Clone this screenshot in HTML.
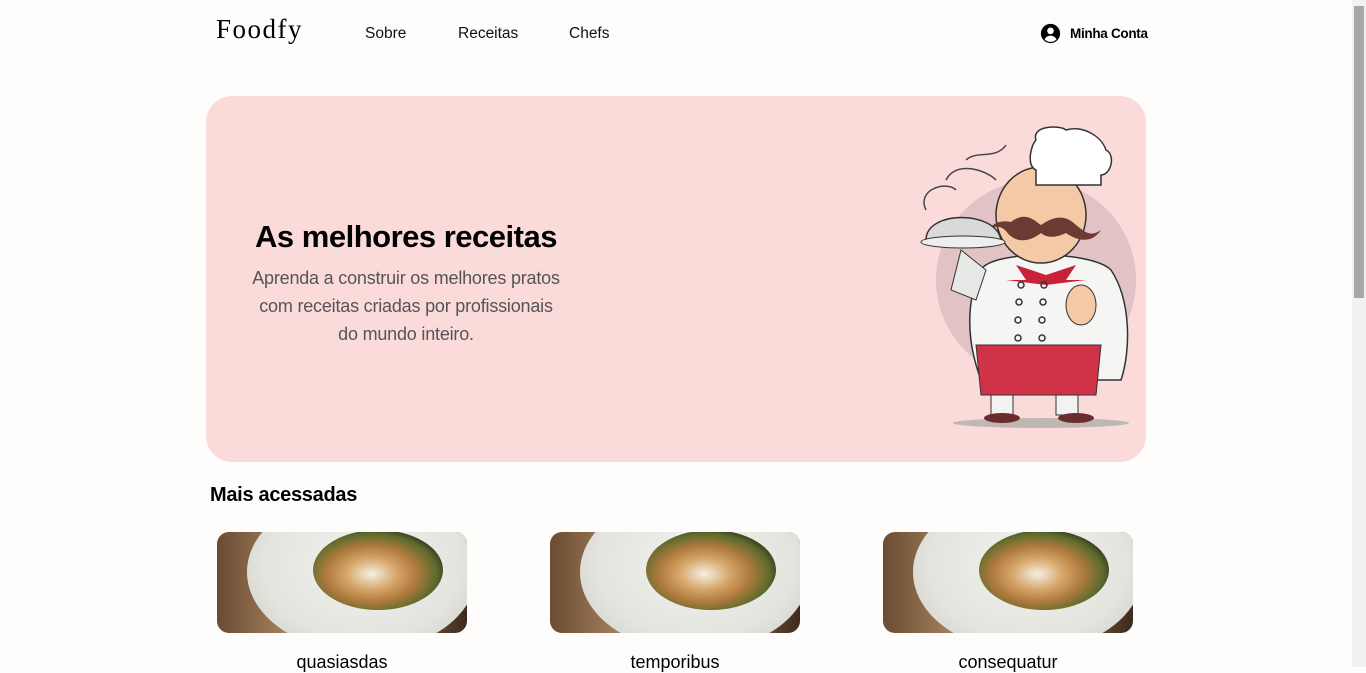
<!DOCTYPE html>
<html><head><meta charset="utf-8"><style>
*{margin:0;padding:0;box-sizing:border-box}
body{width:1366px;height:667px;overflow:hidden;background:#fffdfc;font-family:"Liberation Sans",Roboto,sans-serif;position:relative;color:#000}
.logo{position:absolute;left:216px;top:14px;font-family:"Liberation Serif",serif;font-size:27px;letter-spacing:1.5px}
.nav{position:absolute;top:25px;font-size:15.5px;color:#111}
.acct{position:absolute;left:1040px;top:23px;font-size:13.5px;font-weight:bold;display:flex;align-items:center;gap:9px;letter-spacing:-0.3px}
.hero{position:absolute;left:206px;top:96px;width:940px;height:366px;background:#fbdada;border-radius:26px}
.hero h1{position:absolute;left:0;top:123px;width:400px;text-align:center;font-size:31px;font-weight:bold;white-space:nowrap;letter-spacing:-0.5px}
.hero p{position:absolute;left:0;top:168px;width:400px;text-align:center;font-size:18px;line-height:28px;color:#555;white-space:nowrap;letter-spacing:-0.2px}
h2{position:absolute;left:210px;top:484px;font-size:20px;font-weight:bold;letter-spacing:-0.3px}
.card{position:absolute;top:532px;width:250px;height:101px;border-radius:12px;overflow:hidden;background:linear-gradient(90deg,#6b4b33,#a88560 30%,#8a6d52 70%,#3e2a1c)}
.plate{position:absolute;left:30px;top:-40px;width:230px;height:160px;border-radius:50%;background:radial-gradient(ellipse at 50% 45%,#f2f2ee 0,#e4e4df 60%,#c9c9c2 100%)}
.pasta{position:absolute;left:96px;top:-2px;width:130px;height:80px;border-radius:50%;background:radial-gradient(ellipse at 45% 55%,#f4f0e4 0,#d7a66a 25%,#b07a3e 45%,#5a6b2c 65%,#3c3a22 74%,transparent 78%)}
.cap{position:absolute;top:652px;width:250px;text-align:center;font-size:18px}
.sb{position:absolute;left:1352px;top:0;width:14px;height:667px;background:#f1f1f1}
.sb div{position:absolute;left:2px;top:6px;width:10px;height:292px;background:#a8a8a8}
</style></head><body>
<div class="logo">Foodfy</div>
<div class="nav" style="left:365px">Sobre</div>
<div class="nav" style="left:458px">Receitas</div>
<div class="nav" style="left:569px">Chefs</div>
<div class="acct"><svg width="21" height="21" viewBox="0 0 24 24"><circle cx="12" cy="12" r="11" fill="#000"/><circle cx="12" cy="9" r="3.8" fill="#fff"/><path d="M5 18.5c2-3 4.5-4 7-4s5 1 7 4c-2 2-4.3 3-7 3s-5-1-7-3z" fill="#fff"/></svg>Minha Conta</div>
<div class="hero">
<h1>As melhores receitas</h1>
<p>Aprenda a construir os melhores pratos<br>com receitas criadas por profissionais<br>do mundo inteiro.</p>
<svg style="position:absolute;left:700px;top:28px" width="240" height="310" viewBox="900 124 240 310">
<circle cx="1030" cy="280" r="100" fill="#e2c3c5"/>
<ellipse cx="1035" cy="423" rx="88" ry="5" fill="#bdb8b4"/>
<path d="M920 210c-10-20 20-30 30-20M940 180c10-20 40-10 50 0M960 160c10-10 30 0 40-15" stroke="#444" fill="none" stroke-width="1.5"/>
<rect x="985" y="380" width="22" height="35" fill="#f2f2f2" stroke="#333"/><rect x="1050" y="380" width="22" height="35" fill="#f2f2f2" stroke="#333"/>
<ellipse cx="996" cy="418" rx="18" ry="5" fill="#6a2c2c"/><ellipse cx="1070" cy="418" rx="18" ry="5" fill="#6a2c2c"/>
<path d="M975 270c10-20 110-20 130 0c20 30 20 80 10 110h-140c-15-40-15-80 0-110z" fill="#f5f5f3" stroke="#333" stroke-width="1.5"/>
<path d="M970 345h125l-5 50h-115z" fill="#d03347" stroke="#333"/>
<path d="M955 250l25 20-10 30-25-10z" fill="#e8e8e6" stroke="#333"/>
<ellipse cx="1035" cy="215" rx="45" ry="48" fill="#f4c9a6" stroke="#333" stroke-width="1.5"/>
<path d="M1005 222c15-12 25 0 30 3c5-3 20-15 35 0c10 8 15 12 25 5c-10 15-25 10-35 3c-10 5-20 5-25 0c-10 8-25 12-35-2c-5-5-10-5-15-3c2-5 10-8 20-6z" fill="#6b3a33"/>
<path d="M1010 265l30 10 30-10-10 15 20 0-40 5-40-5 20 0z" fill="#c8223a"/>
<path d="M1030 140c-5-15 25-15 30-10c15-5 35 5 40 20c10 5 5 25-5 25l0 10h-65l0-15c-10-5-5-25 0-30z" fill="#fff" stroke="#333" stroke-width="1.5"/>
<path d="M920 240c0-30 70-30 75 0z" fill="#d9d9d9" stroke="#333" stroke-width="1.5"/>
<ellipse cx="957" cy="242" rx="42" ry="6" fill="#eee" stroke="#333"/>
<ellipse cx="1075" cy="305" rx="15" ry="20" fill="#f4c9a6" stroke="#333"/>
<g fill="none" stroke="#333" stroke-width="1.5"><circle cx="1015" cy="285" r="3"/><circle cx="1038" cy="285" r="3"/><circle cx="1013" cy="302" r="3"/><circle cx="1037" cy="302" r="3"/><circle cx="1012" cy="320" r="3"/><circle cx="1036" cy="320" r="3"/><circle cx="1012" cy="338" r="3"/><circle cx="1036" cy="338" r="3"/></g>
</svg>
</div>
<h2>Mais acessadas</h2>
<div class="card" style="left:217px"><div class="plate"></div><div class="pasta"></div></div>
<div class="card" style="left:550px"><div class="plate"></div><div class="pasta"></div></div>
<div class="card" style="left:883px"><div class="plate"></div><div class="pasta"></div></div>
<div class="cap" style="left:217px">quasiasdas</div>
<div class="cap" style="left:550px">temporibus</div>
<div class="cap" style="left:883px">consequatur</div>
<div class="sb"><div></div></div>
</body></html>
